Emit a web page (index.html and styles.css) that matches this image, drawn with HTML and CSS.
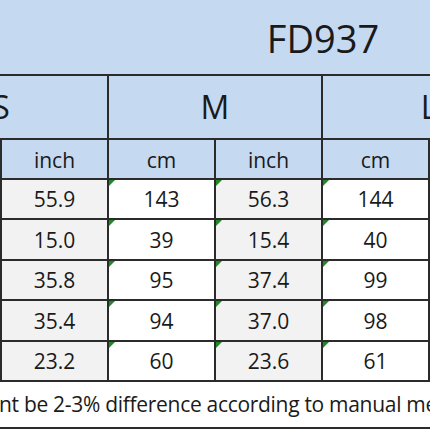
FILE: index.html
```html
<!DOCTYPE html>
<html>
<head>
<meta charset="utf-8">
<link rel="stylesheet" href="styles.css">
</head>
<body>
<div class="sheet">
  <div class="grid">
    <div class="title">FD937</div>

    <div class="size">S</div>
    <div class="size">M</div>
    <div class="size">L</div>

    <div class="unit">cm</div>
    <div class="unit">inch</div>
    <div class="unit">cm</div>
    <div class="unit">inch</div>
    <div class="unit">cm</div>
    <div class="unit">inch</div>

    <div class="cell cm">142</div>
    <div class="cell inch">55.9</div>
    <div class="cell cm flag">143</div>
    <div class="cell inch flag">56.3</div>
    <div class="cell cm flag">144</div>
    <div class="cell inch flag">56.7</div>

    <div class="cell cm">38</div>
    <div class="cell inch">15.0</div>
    <div class="cell cm flag">39</div>
    <div class="cell inch flag">15.4</div>
    <div class="cell cm flag">40</div>
    <div class="cell inch flag">15.7</div>

    <div class="cell cm">91</div>
    <div class="cell inch">35.8</div>
    <div class="cell cm flag">95</div>
    <div class="cell inch flag">37.4</div>
    <div class="cell cm flag">99</div>
    <div class="cell inch flag">39.0</div>

    <div class="cell cm">90</div>
    <div class="cell inch">35.4</div>
    <div class="cell cm flag">94</div>
    <div class="cell inch flag">37.0</div>
    <div class="cell cm flag">98</div>
    <div class="cell inch flag">38.6</div>

    <div class="cell cm">59</div>
    <div class="cell inch">23.2</div>
    <div class="cell cm flag">60</div>
    <div class="cell inch flag">23.6</div>
    <div class="cell cm flag">61</div>
    <div class="cell inch flag">24.0</div>

    <div class="note">nt be 2-3% difference according to manual measurement</div>
  </div>
</div>
</body>
</html>
```

FILE: styles.css
```css
body {
  margin: 0;
  background: #ffffff;
  font-family: "Open Sans", "Liberation Sans", sans-serif;
  color: #1a1a1a;
}

.sheet {
  width: 430px;
  height: 430px;
  overflow: hidden;
  background: #ffffff;
}

.grid {
  display: grid;
  grid-template-columns: repeat(6, 105px);
  grid-template-rows: 74px 62px 38px 38px 39px 38px 39px 38px 45px;
  gap: 2px;
  width: 640px;
  margin-left: -105px;
  padding-bottom: 2px;
  background: #2b2b2b;
}

.title {
  grid-column: 1 / -1;
  background: #c5d9f1;
  font-size: 38px;
  line-height: 72px;
  padding-top: 2px;
  padding-left: 216px;
  text-align: center;
}

.size {
  grid-column: span 2;
  background: #c5d9f1;
  font-size: 32px;
  line-height: 62px;
  text-align: center;
}

.unit {
  background: #c5d9f1;
  font-size: 21px;
  line-height: 36px;
  padding-top: 2px;
  text-align: center;
}

.cell {
  position: relative;
  display: flex;
  align-items: center;
  justify-content: center;
  font-size: 21px;
}

.cm {
  background: #ffffff;
}

.inch {
  background: #f2f2f2;
}

.flag::before {
  content: "";
  position: absolute;
  left: 0;
  top: 0;
  border-top: 6px solid #1f8a22;
  border-right: 6px solid transparent;
}

.note {
  grid-column: 1 / -1;
  display: flex;
  align-items: center;
  background: #ffffff;
  font-size: 21px;
  letter-spacing: -0.3px;
  padding-left: 104px;
  padding-bottom: 1px;
  white-space: nowrap;
  overflow: hidden;
}
```
